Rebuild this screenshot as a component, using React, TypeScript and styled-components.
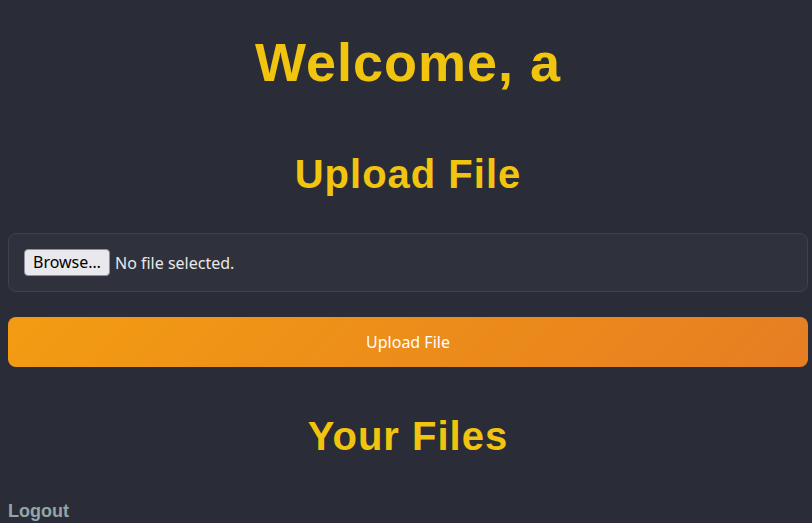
import { FC, useState } from "react";

// style
import styled, { createGlobalStyle } from "styled-components";

const GlobalStyle = createGlobalStyle`
    html, body {
        background: #2a2d38;
    }

    body {
        margin: 8px 4px 8px 8px;
        font-family: "Noto Sans", "Open Sans", sans-serif;
        color: #e6e6e6;
    }
`

const Dashboard = styled.div`
    max-width: 800px;
    display: flex;
    flex-direction: column;
`

const Title = styled.h1`
    margin: 23px 0 0;
    font-family: "Liberation Sans", Arial, sans-serif;
    font-size: 54px;
    font-weight: 700;
    letter-spacing: 1px;
    text-align: center;
    color: #f1c40f;
`

const SectionTitle = styled.h2<{ $gapTop: number }>`
    margin: ${({ $gapTop }) => $gapTop}px 0 0;
    font-family: "Liberation Sans", Arial, sans-serif;
    font-size: 40px;
    font-weight: 700;
    letter-spacing: 1px;
    text-align: center;
    color: #f1c40f;
`

const UploadForm = styled.form`
    display: flex;
    flex-direction: column;
    gap: 25px;
    margin-top: 36px;
`

const FilePicker = styled.label`
    display: flex;
    align-items: center;
    gap: 5px;
    padding: 15px;
    background: #2f323d;
    border: 1px solid #40434d;
    border-radius: 8px;
    font-size: 16px;
    color: #e8e8e8;
    cursor: pointer;

    & input {
        display: none;
    }
`

const BrowseButton = styled.span`
    display: inline-block;
    padding: 1px 8px;
    line-height: 23px;
    background: #e9e9ed;
    border: 1px solid #8f8f9d;
    border-radius: 4px;
    color: #000;
    font-size: 16px;
`

const UploadButton = styled.button`
    height: 50px;
    border: none;
    border-radius: 8px;
    background: linear-gradient(135deg, #f39c12, #e67e22);
    color: #fff;
    font-family: "Noto Sans", "Open Sans", sans-serif;
    font-size: 16px;
    cursor: pointer;
`

const FileList = styled.ul`
    margin: 0;
    padding: 0;
    list-style: none;
`

const LogoutLink = styled.a`
    margin-top: 42px;
    font-family: "Liberation Sans", Arial, sans-serif;
    font-size: 18px;
    font-weight: 700;
    color: #95a5a6;
    text-decoration: none;
    align-self: flex-start;
`

const App: FC = () => {
    const user = "a"
    const [fileName, setFileName] = useState("")
    const [files] = useState<string[]>([])

    return (
        <>
            <GlobalStyle />
            <Dashboard>
                <Title>Welcome, {user}</Title>

                <SectionTitle $gapTop={59}>Upload File</SectionTitle>
                <UploadForm onSubmit={(e) => e.preventDefault()}>
                    <FilePicker>
                        <input
                            type="file"
                            onChange={(e) => setFileName(e.target.files?.[0]?.name ?? "")}
                        />
                        <BrowseButton>Browse…</BrowseButton>
                        <span>{fileName || "No file selected."}</span>
                    </FilePicker>
                    <UploadButton type="submit">Upload File</UploadButton>
                </UploadForm>

                <SectionTitle $gapTop={47}>Your Files</SectionTitle>
                <FileList>
                    {files.map((f) => <li key={f}>{f}</li>)}
                </FileList>

                <LogoutLink href="#">Logout</LogoutLink>
            </Dashboard>
        </>
    )
}

export default App
